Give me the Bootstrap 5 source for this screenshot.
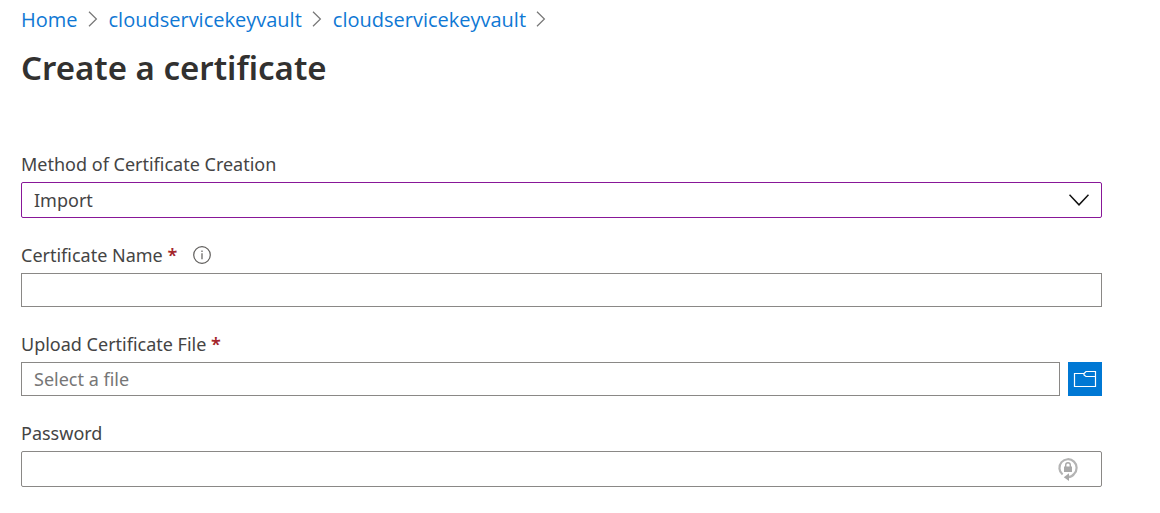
<!DOCTYPE html>
<html lang="en">
<head>
<meta charset="utf-8">
<meta name="viewport" content="width=device-width, initial-scale=1">
<title>Create a certificate</title>
<link href="https://cdn.jsdelivr.net/npm/bootstrap@5.3.0/dist/css/bootstrap.min.css" rel="stylesheet">
<style>
  body { font-family: "Noto Sans", "Open Sans", sans-serif; font-size: 18px; line-height: 24px; color: #444; background: #fff; }
  .page { padding: 6px 58px 24px 21px; }
  .crumbs { font-family: "Open Sans", "Noto Sans", sans-serif; font-size: 20px; line-height: 28px; gap: 11px; margin-bottom: 12px; }
  .crumbs li { gap: 10px; }
  .crumbs svg { margin-bottom: 2px; }
  .crumbs a { color: #0f78d4; }
  .title { font-size: 33px; line-height: 44px; font-weight: 600; color: #323130; margin-bottom: 62px; }
  .fields { gap: 25px; }
  .form-label { margin-bottom: 6px; }
  .required { color: #a4262c; font-weight: 600; }
  .field-box, .field-box:focus { height: 34px; padding: 0 12px; font-size: 18px; line-height: 24px; color: #444; border: 1px solid #8a8886; border-radius: 0; background-color: #fff; box-shadow: none; }
  .field-box::placeholder { color: #767676; }
  .tall, .tall:focus { height: 36px; border-radius: 2px; }
  .method, .method:focus { border-color: #881798; background-image: none; }
  .in-field { position: absolute; top: 0; bottom: 0; margin: auto 0; pointer-events: none; }
  .chevron { right: 13px; }
  .reveal { right: 24px; }
  .browse { width: 34px; height: 34px; background: #0078d4; border-radius: 0; }
</style>
</head>
<body>
<main class="page">
  <nav aria-label="Breadcrumb">
    <ol class="crumbs list-unstyled d-flex flex-wrap">
      <li class="d-flex align-items-center"><a class="text-decoration-none" href="#">Home</a>
        <svg width="10" height="16" viewBox="0 0 10 16" fill="none" stroke="#767676" stroke-width="1.2" aria-hidden="true"><path d="M1 .8 8.400 8 1 15.200"/></svg></li>
      <li class="d-flex align-items-center"><a class="text-decoration-none" href="#">cloudservicekeyvault</a>
        <svg width="10" height="16" viewBox="0 0 10 16" fill="none" stroke="#767676" stroke-width="1.2" aria-hidden="true"><path d="M1 .8 8.400 8 1 15.200"/></svg></li>
      <li class="d-flex align-items-center"><a class="text-decoration-none" href="#">cloudservicekeyvault</a>
        <svg width="10" height="16" viewBox="0 0 10 16" fill="none" stroke="#767676" stroke-width="1.2" aria-hidden="true"><path d="M1 .8 8.400 8 1 15.200"/></svg></li>
    </ol>
  </nav>
  <h1 class="title">Create a certificate</h1>
  <form class="fields d-flex flex-column">
    <div>
      <label class="form-label d-block" for="method">Method of Certificate Creation</label>
      <div class="position-relative">
        <select id="method" class="form-select field-box tall method"><option>Import</option><option>Generate</option></select>
        <svg class="in-field chevron" width="20" height="12" viewBox="0 0 20 12" fill="none" stroke="#111" stroke-width="1.5" aria-hidden="true"><path d="m.5.8 9.500 10L19.500.8"/></svg>
      </div>
    </div>
    <div>
      <div class="d-flex align-items-center">
        <label class="form-label" for="name">Certificate Name <span class="required">*</span></label>
        <button type="button" class="btn border-0 p-0 form-label d-flex align-items-center ms-3" aria-label="More information">
          <svg width="18" height="18" viewBox="0 0 18 18" fill="none" stroke="#605e5c" stroke-width="1.2"><circle cx="9" cy="9" r="8.300"/><path d="M9 7.200v6M9 4.500v1.500"/></svg>
        </button>
      </div>
      <input id="name" type="text" class="form-control field-box">
    </div>
    <div>
      <label class="form-label d-block" for="file">Upload Certificate File <span class="required">*</span></label>
      <div class="d-flex gap-2">
        <input id="file" type="text" class="form-control field-box" placeholder="Select a file">
        <button type="button" class="browse btn border-0 p-0 flex-shrink-0 d-flex align-items-center justify-content-center" aria-label="Browse for a file">
          <svg width="24" height="18" viewBox="0 0 24 18" fill="none" stroke="#fff" stroke-width="1.2"><path d="M11 3.500H1.500v13h21v-15h-9.500L11 3.500v1.500l2 1.500h9.500"/></svg>
        </button>
      </div>
    </div>
    <div>
      <label class="form-label d-block" for="password">Password</label>
      <div class="position-relative">
        <input id="password" type="password" class="form-control field-box tall">
        <svg class="in-field reveal" width="20" height="24" viewBox="0 0 20 24" fill="none" aria-hidden="true"><path d="M4.600 17.500A8.600 8.600 0 1 1 16 17Q14 19.800 10 20.200" stroke="#b4b4b4" stroke-width="2.200"/><path d="m5.800 20.200 5.200-4v7.800z" fill="#a8a8a8"/><rect x="6" y="9.500" width="8" height="5.500" fill="#a8a8a8"/><path d="M7.700 10V8a2.300 2.300 0 0 1 4.600 0v2" stroke="#a8a8a8" stroke-width="1.400"/></svg>
      </div>
    </div>
  </form>
</main>
<script src="https://cdn.jsdelivr.net/npm/bootstrap@5.3.0/dist/js/bootstrap.bundle.min.js"></script>
</body>
</html>
